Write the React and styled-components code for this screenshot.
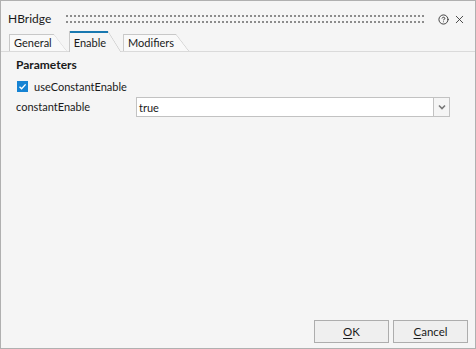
import React from "react";
import styled, { createGlobalStyle, css } from "styled-components";
import { CircleHelp, X } from "lucide-react";

const Global = createGlobalStyle`
  * { box-sizing: border-box; }
  html, body { margin: 0; padding: 0; background: #f5f5f5; }
  body {
    font-family: "Segoe UI", Lato, "Liberation Sans", sans-serif;
    font-size: 11px;
    color: #1a1a1a;
  }
`;

const Window = styled.div`
  width: 476px;
  height: 349px;
  border: 1px solid #b0b0b0;
  background: #f5f5f5;
  display: flex;
  flex-direction: column;
`;

const TitleBar = styled.div`
  height: 30px;
  padding: 6px 8px 0 7px;
  display: flex;
  align-items: center;
`;

const Title = styled.span`
  line-height: 24px;
  font-size: 12px;
`;

const Grip = styled.svg`
  flex: 1;
  align-self: flex-start;
  height: 8px;
  margin: 8px 10px 0 15px;
  display: block;
`;

const IconButton = styled.span`
  display: flex;
  align-items: center;
  justify-content: center;
  width: 16px;
  height: 16px;
  color: #333;
`;

const TabStrip = styled.div`
  height: 21px;
  padding-left: 8px;
  display: flex;
  align-items: flex-end;
  border-bottom: 1px solid #dadada;
`;

const Tab = styled.div`
  position: relative;
  height: 17px;
  margin-right: 2px;
  padding: 0 15px 0 4px;
  display: flex;
  align-items: center;
  background: #f9f9f9;
  border-left: 1px solid #c8c8c8;
  clip-path: polygon(0 0, calc(100% - 13px) 0, 100% 100%, 0 100%);
  &::before {
    content: "";
    position: absolute;
    left: 0;
    top: 0;
    right: 13px;
    height: 1px;
    background: #c8c8c8;
  }
  &::after {
    content: "";
    position: absolute;
    right: 0;
    top: 0;
    bottom: 0;
    width: 13px;
    background: linear-gradient(
      to top right,
      transparent calc(50% - 0.9px),
      #c2c2c2 50%,
      transparent calc(50% + 0.9px)
    );
  }
  ${(p) =>
    p.$active &&
    css`
      height: 21px;
      margin-bottom: -1px;
      padding-top: 1px;
      background: #f5f5f5;
      &::before {
        height: 2px;
        background: #1878b0;
      }
    `}
`;

const Content = styled.div`
  flex: 1;
  padding: 5px 25px 0 15px;
  display: flex;
  flex-direction: column;
`;

const SectionTitle = styled.div`
  font-weight: 700;
  font-size: 12px;
  line-height: 16px;
`;

const CheckRow = styled.label`
  margin-top: 5px;
  height: 16px;
  display: flex;
  align-items: center;
  gap: 6px;
`;

const CheckBox = styled.span`
  width: 11px;
  height: 11px;
  margin-left: 1px;
  background: #1683d3;
  display: flex;
  align-items: center;
  justify-content: center;
`;

const FieldRow = styled.div`
  margin-top: 3px;
  height: 20px;
  display: flex;
  align-items: center;
`;

const FieldLabel = styled.span`
  width: 120px;
  margin-top: -1px;
`;

const Combo = styled.div`
  flex: 1;
  height: 20px;
  display: flex;
`;

const ComboValue = styled.div`
  flex: 1;
  background: #fff;
  border: 1px solid #c2c2c2;
  padding: 0 2px;
  display: flex;
  align-items: center;
`;

const ComboButton = styled.div`
  width: 16px;
  border: 1px solid #c2c2c2;
  border-left: none;
  display: flex;
  align-items: center;
  justify-content: center;
  background: #f5f5f5;
`;

const Footer = styled.div`
  display: flex;
  justify-content: flex-end;
  gap: 4px;
  padding: 0 7px 5px 0;
`;

const Button = styled.button`
  width: 75px;
  height: 23px;
  border: 1px solid #adadad;
  background: #efefef;
  font: inherit;
  font-size: 11.5px;
  color: #1a1a1a;
  padding: 0;
  u { text-underline-offset: 2px; }
`;

export default function App() {
  return (
    <>
      <Global />
      <Window>
        <TitleBar>
          <Title>HBridge</Title>
          <Grip>
            <defs>
              <pattern id="gripDots" width="4" height="6" patternUnits="userSpaceOnUse">
                <rect x="0" y="0" width="2" height="2" fill="#8c8c8c" />
              </pattern>
            </defs>
            <rect x="0" y="0" width="100%" height="8" fill="url(#gripDots)" />
          </Grip>
          <IconButton>
            <CircleHelp size={11} strokeWidth={2} />
          </IconButton>
          <IconButton>
            <X size={13} strokeWidth={1.6} />
          </IconButton>
        </TitleBar>
        <TabStrip>
          <Tab>General</Tab>
          <Tab $active>Enable</Tab>
          <Tab>Modifiers</Tab>
        </TabStrip>
        <Content>
          <SectionTitle>Parameters</SectionTitle>
          <CheckRow>
            <CheckBox>
              <svg width="9" height="9" viewBox="0 0 9 9">
                <polyline points="1.5,4.8 3.6,6.8 7.6,2.4" fill="none" stroke="#fff" strokeWidth="1.4" />
              </svg>
            </CheckBox>
            useConstantEnable
          </CheckRow>
          <FieldRow>
            <FieldLabel>constantEnable</FieldLabel>
            <Combo>
              <ComboValue>true</ComboValue>
              <ComboButton>
                <svg width="8" height="6" viewBox="0 0 8 6">
                  <polyline points="1,1.5 4,4.5 7,1.5" fill="none" stroke="#777" strokeWidth="1.6" />
                </svg>
              </ComboButton>
            </Combo>
          </FieldRow>
        </Content>
        <Footer>
          <Button><u>O</u>K</Button>
          <Button><u>C</u>ancel</Button>
        </Footer>
      </Window>
    </>
  );
}
